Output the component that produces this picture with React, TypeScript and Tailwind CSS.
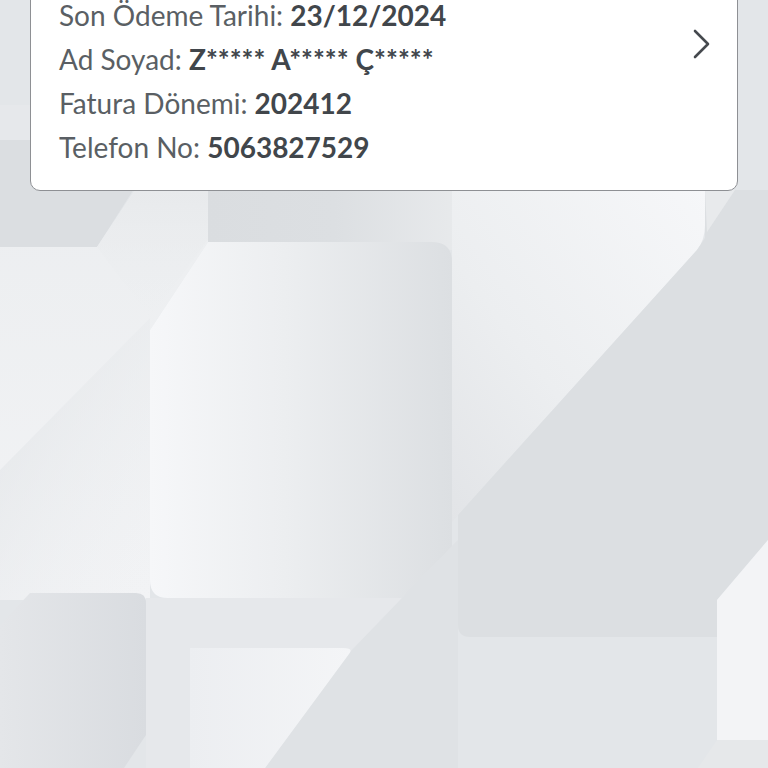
import React from "react";

function Background() {
  return (
    <svg
      className="absolute inset-0"
      width="768"
      height="768"
      viewBox="0 0 768 768"
      preserveAspectRatio="none"
    >
      <defs>
        <linearGradient id="tab" x1="0" y1="0" x2="1" y2="0">
          <stop offset="0" stopColor="#f6f7f9" />
          <stop offset="0.45" stopColor="#eceef0" />
          <stop offset="1" stopColor="#dcdfe2" />
        </linearGradient>
        <linearGradient id="left" x1="0" y1="0" x2="0" y2="1">
          <stop offset="0" stopColor="#eceef0" />
          <stop offset="1" stopColor="#f2f3f5" />
        </linearGradient>
        <linearGradient id="topmid" x1="0" y1="0" x2="1" y2="0">
          <stop offset="0" stopColor="#dadde0" />
          <stop offset="0.5" stopColor="#dcdfe2" />
          <stop offset="1" stopColor="#e8eaec" />
        </linearGradient>
        <linearGradient id="tr" x1="1" y1="0" x2="0" y2="1">
          <stop offset="0" stopColor="#f6f7f9" />
          <stop offset="0.6" stopColor="#eceef0" />
          <stop offset="1" stopColor="#e2e4e7" />
        </linearGradient>
        <linearGradient id="bl" x1="0" y1="0" x2="1" y2="0">
          <stop offset="0" stopColor="#e4e6e9" />
          <stop offset="1" stopColor="#d9dce0" />
        </linearGradient>
        <linearGradient id="bm" x1="0" y1="0" x2="1" y2="0">
          <stop offset="0" stopColor="#eceef1" />
          <stop offset="1" stopColor="#f4f5f7" />
        </linearGradient>
        <linearGradient id="wedge" x1="0" y1="0" x2="1" y2="1">
          <stop offset="0" stopColor="#dfe2e5" />
          <stop offset="1" stopColor="#eef0f2" stopOpacity="0" />
        </linearGradient>
        <linearGradient id="band" x1="0" y1="0" x2="0" y2="1">
          <stop offset="0" stopColor="#e8eaec" />
          <stop offset="1" stopColor="#eceef0" stopOpacity="0" />
        </linearGradient>
      </defs>
      <rect x="0" y="0" width="768" height="768" fill="#e3e6e9" />
      <path d="M0 105 L30 105 L30 140 L0 140 Z" fill="#e6e8eb" />
      <path d="M0 140 L165 140 L97 247 L0 247 Z" fill="#dbdee1" />
      <path
        d="M0 247 L97 247 L135 190 L245 190 L208 242 L150 330 L150 600 L0 600 Z"
        fill="url(#left)"
      />
      <path d="M135 190 L245 190 L150 318 L97 247 Z" fill="url(#band)" />
      <path d="M150 318 L150 600 L0 600 L0 470 Z" fill="url(#wedge)" opacity="0.8" />
      <path d="M208 190 L460 190 L460 250 L208 250 Z" fill="url(#topmid)" />
      <path
        d="M452 190 L705 190 L705 225 Q705 240 697 250 L490 480 L452 522 Z"
        fill="url(#tr)"
      />
      <path
        d="M697 250 L705 238 L705 190 L768 190 L768 540 L717 600 L717 637 L470 637 Q458 637 458 625 L458 515 Z"
        fill="#dcdfe2"
      />
      <path d="M705 190 L735 190 L707 232 Z" fill="#e8eaec" />
      <path
        d="M208 242 L432 242 Q452 242 452 262 L452 580 Q452 598 434 598 L168 598 Q150 598 150 580 L150 330 Z"
        fill="url(#tab)"
      />
      <path d="M146 598 L458 598 L458 768 L146 768 Z" fill="#e6e8eb" />
      <path d="M400 600 L458 540 L458 768 L400 768 Z" fill="#e3e5e8" />
      <path d="M350 652 L458 540 L458 768 L265 768 Z" fill="#dfe2e5" />
      <path d="M717 600 L768 540 L768 740 L717 740 Z" fill="#f3f4f6" />
      <path d="M717 740 L768 740 L768 768 L698 768 Z" fill="#e6e8ea" />
      <path
        d="M30 593 L136 593 Q146 593 146 603 L146 735 L124 768 L0 768 L0 625 Z"
        fill="url(#bl)"
      />
      <path
        d="M190 648 L343 648 Q354 648 349 654 L265 768 L190 768 Z"
        fill="url(#bm)"
      />
    </svg>
  );
}

function Row({
  label,
  value,
  first,
}: {
  label: string;
  value: string;
  first?: boolean;
}) {
  return (
    <div
      className={
        first
          ? "h-[30px] leading-[30px] mb-[7px] whitespace-nowrap"
          : "h-[44px] leading-[44px] whitespace-nowrap"
      }
    >
      <span className="text-[#5a5f64]">{label} </span>
      <span className="font-bold text-[#41464b]">{value}</span>
    </div>
  );
}

export default function App() {
  return (
    <div
      className="relative w-[768px] h-[768px] overflow-hidden bg-[#e3e6e9]"
      style={{ fontFamily: "Lato, 'Open Sans', sans-serif" }}
    >
      <Background />
      <div className="relative px-[30px]">
        <div className="-mt-[30px] flex items-start rounded-[10px] border-[1.5px] border-[#8e9094] bg-white pl-[28px] pr-[26px] pt-[28.5px] pb-[21px] text-[28px]">
          <div className="flex flex-1 flex-col">
            <Row first label="Son Ödeme Tarihi:" value="23/12/2024" />
            <Row label="Ad Soyad:" value="Z***** A***** Ç*****" />
            <Row label="Fatura Dönemi:" value="202412" />
            <Row label="Telefon No:" value="5063827529" />
          </div>
          <svg
            className="mt-[29px]"
            width="18"
            height="30"
            viewBox="0 0 18 30"
            fill="none"
          >
            <polyline
              points="2,2 15,15 2,28"
              stroke="#45494e"
              strokeWidth="2.6"
              strokeLinecap="round"
              strokeLinejoin="round"
            />
          </svg>
        </div>
      </div>
    </div>
  );
}
